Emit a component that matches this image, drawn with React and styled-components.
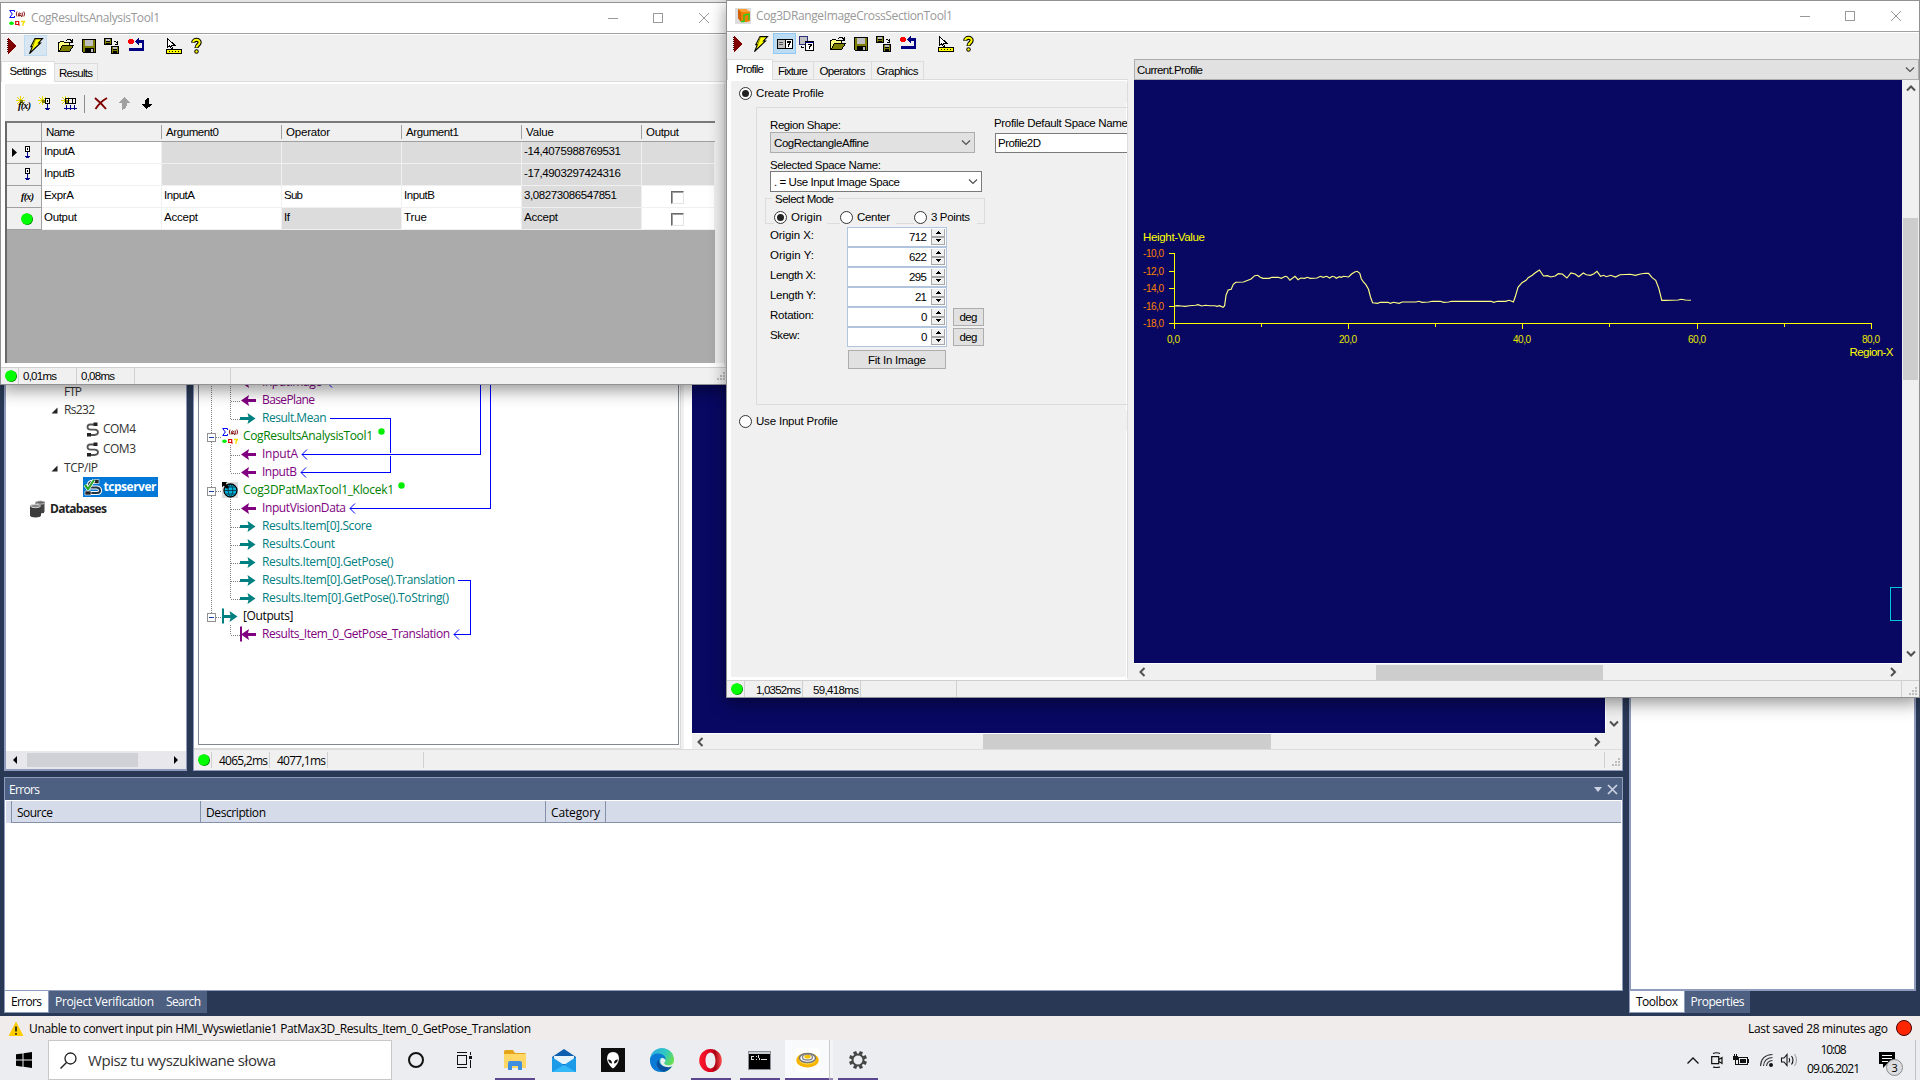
import React, { useLayoutEffect, useRef } from "react";
import styled, { createGlobalStyle, css } from "styled-components";

const UI = '"Open Sans", "Noto Sans", sans-serif';
const SANS = '"Liberation Sans", Arial, sans-serif';
const NAVY = "#080863";

const Global = createGlobalStyle`
  * { box-sizing: border-box; }
  body { margin: 0; overflow: hidden; background: #293955; }
  svg { display: block; flex: none; overflow: visible; }
`;

/* ---------- text fitted to a column width ---------- */
const TextSpan = styled.span`
  display: inline-block;
  flex: none;
  white-space: pre;
  font-family: ${(p) => (p.$ui ? UI : SANS)};
  font-size: ${(p) => p.$size || (p.$ui ? 12 : 11.5)}px;
  font-weight: ${(p) => (p.$bold ? 700 : 400)};
  line-height: 14px;
  color: ${(p) => p.$color || "#000"};
`;

function Text({ w, ui, size, bold, color, children }) {
  const ref = useRef(null);
  useLayoutEffect(() => {
    const el = ref.current;
    if (!w || !el) return;
    el.style.letterSpacing = "0px";
    const natural = el.getBoundingClientRect().width;
    const n = Math.max(1, el.textContent.length - 1);
    el.style.letterSpacing = `${((w - natural) / n).toFixed(3)}px`;
    el.style.width = `${w}px`;
  }, [w, children]);
  return (
    <TextSpan ref={ref} $ui={ui} $size={size} $bold={bold} $color={color}>
      {children}
    </TextSpan>
  );
}

/* ---------- icons ---------- */
const Px = ({ w = 16, h = 16, vb, crisp = true, children }) => (
  <svg width={w} height={h} viewBox={vb || `0 0 ${w} ${h}`} shapeRendering={crisp ? "crispEdges" : "auto"} fill="none">
    {children}
  </svg>
);

const PlayIcon = () => (
  <Px w={9}>
    <path d="M1 0v16l8-8z" fill="#800000" />
    <path d="M.5 1v14" stroke="#400" strokeDasharray="1 1" />
  </Px>
);
const BoltIcon = () => (
  <Px w={14} crisp={false}>
    <path d="M6 .6h7.5L9.5 5h2L2 14l-1.5 1.6L3.4 8.6H1.8z" fill="#ff0" stroke="#000" strokeWidth="1.1" />
    <path d="M3.6 8.6 6.5 1" stroke="#808000" />
  </Px>
);
const OpenIcon = () => (
  <Px>
    <path d="M.5 13.5v-9h1l1-1h3l1 1h5v3" fill="#ffff80" stroke="#000" />
    <path d="M1 13.5 4.5 7.5h11l-4 6z" fill="#808000" stroke="#000" />
    <path d="M8.5 2.5l1.5-1h2l2 2M14.5 1v3h-3" stroke="#000" />
  </Px>
);
const SaveShape = () => (
  <>
    <path d="M.5.5h13v13h-12l-1-1z" fill="#808000" stroke="#000" />
    <path d="M3 1h8v6H3z" fill="#c0c0c0" />
    <path d="M3 9h9v5H3z" fill="#000" />
    <path d="M9 10h2v3H9z" fill="#c0c0c0" />
  </>
);
const SaveIcon = () => (
  <Px w={14} h={14}>
    <SaveShape />
  </Px>
);
const CopiesIcon = () => (
  <Px>
    <path d="M0 0h8v7H0zM7 8h8v8H7z" fill="#000" />
    <path d="M1 1h1v5H1zM6 1h1v5H6zM8 9h1v6H8zM13 9h1v6h-1zM2 4h4v1H2zM9 12h4v1H9z" fill="#808000" />
    <path d="M2 1h4v2H2zM9 9h4v2H9z" fill="#c0c0c0" />
    <path d="M9.5 3.5h2l1.500 1.500M13.500 3v3h-3" stroke="#000" />
  </Px>
);
const ResetIcon = () => (
  <Px>
    <circle cx="3" cy="3.500" r="3" fill="#f00" />
    <path d="M9 3.500h6v7.500M1 11.500h15" stroke="#000080" strokeWidth="2.600" />
    <path d="M7 3.500l4-3.500v7z" fill="#000080" />
  </Px>
);
const RulerIcon = () => (
  <Px>
    <path d="M1.500.5v9l2-2 2 3.500h1l-1-4h3z" fill="#fff" stroke="#000" />
    <path d="M.5 11.500h15v4H.5z" fill="#ff0" stroke="#000" />
    <path d="M3 13.500h11" stroke="#000" strokeDasharray="1 2" />
  </Px>
);
const HelpIcon = () => (
  <Px w={11} crisp={false}>
    <path d="M2.200 4.800C2.200 1 9 1 8.600 4.600 8.400 7 5.500 7 5.500 10" stroke="#000" strokeWidth="4.200" />
    <circle cx="5.500" cy="13.500" r="2.200" fill="#000" />
    <path d="M2.200 4.300C2.200 1 9 1 8.600 4.600 8.400 7 5.500 7 5.500 9.500" stroke="#ff0" strokeWidth="2" />
    <circle cx="5.500" cy="13.500" r="1.200" fill="#ff0" />
  </Px>
);
const AnalysisIcon = () => (
  <Px crisp={false}>
    <path d="M5.500 2V.5H.7L3.300 4 .7 7.500h4.800V6" stroke="#00f" strokeWidth="1" />
    <path d="M8 1.500q-1.500 2.500 0 5M14.800 1.500q1.500 2.500 0 5" stroke="#800000" strokeWidth=".9" />
    <path d="M10.500 2.500Q8.500 4 10 6.300L11.500 3M11.500 5l.5 1.300h1.200V2.500" stroke="#800000" strokeWidth="1" />
    <ellipse cx="2.500" cy="13.300" rx="2.300" ry="1.800" fill="#0e0" />
    <path d="M6.700 11.500h3v3h-3zM9 14l1.500 1.500" stroke="#e00000" strokeWidth="1.200" />
    <path d="M12 11.500h3.500L14 13.800V16" stroke="#f0e000" strokeWidth="1.300" />
  </Px>
);
const RangeIcon = () => (
  <Px crisp={false}>
    <path d="M0 0h16v16H0z" fill="#ddd" />
    <path d="M3 1h8l4 3v9l-3 1H6l-3-4z" fill="#f08000" />
    <path d="M3 1h8l4 3H6z" fill="#ffa030" />
    <path d="M3 1l3 3v10l-3-4z" fill="#d06000" />
    <path d="M6 13.500h3V7l5-1v6" stroke="#20d020" strokeWidth="1.300" />
  </Px>
);
const PanelsIcon = () => (
  <Px h={10}>
    <path d="M.5.5h15v9H.5z" fill="#fff" stroke="#000" />
    <path d="M1 1h7v8H1z" fill="#c0c0c0" />
    <path d="M2 3.500h4M2 5.500h4" stroke="#555" />
    <path d="M8.500 0v10" stroke="#000" />
    <path d="M10 2h4v2h-1v2h-1v2h-1V5h1V4h-2z" fill="#000" />
  </Px>
);
const FloatIcon = () => (
  <Px w={15} h={15}>
    <path d="M.5.5h8v8h-8z" fill="#c0c0c0" stroke="#303080" />
    <path d="M6.500 5.500h8v9h-8z" fill="#fff" stroke="#000" />
    <path d="M6 6.500h9" stroke="#000080" />
    <path d="M9 8h4v2h-1v1h-1v2h-1v-3h1V9H9z" fill="#000" />
    <path d="M2.500 10v1.500H5" stroke="#000" />
  </Px>
);
const Spark = () => (
  <>
    <path d="M4.500 0v9M0 4.500h9M1 1l7 7M8 1L1 8" stroke="#e6d800" strokeWidth="1" />
    <path d="M4 4h3v3H4z" fill="#808000" />
  </>
);
const FxShape = ({ x = 0, y = 12 }) => (
  <text x={x} y={y} fontFamily="Liberation Serif, serif" fontStyle="italic" fontWeight="700" fontSize="10" fill="#000" textLength="13">
    f(x)
  </text>
);
const NewFxIcon = () => (
  <Px crisp={false}>
    <g shapeRendering="crispEdges">
      <Spark />
    </g>
    <FxShape x={2} y={13} />
  </Px>
);
const FxIcon = () => (
  <Px w={13} h={12} crisp={false}>
    <FxShape y={9} />
  </Px>
);
const Pin = ({ x = 0, y = 0 }) => (
  <g transform={`translate(${x} ${y})`}>
    <path d="M.5.5h4v5h-4z" fill="#fff" stroke="#000" />
    <path d="M2.500 2v2" stroke="#000" />
    <path d="M2.500 6v6M0 10h5M1 11h3" stroke="#000090" />
  </g>
);
const NewPinIcon = () => (
  <Px w={13}>
    <Spark />
    <Pin x={7} y={2} />
  </Px>
);
const NewPinsIcon = () => (
  <Px>
    <Spark />
    <path d="M4.500 2.500h10v5h-10zM7.500 2v6M11.500 2v6" stroke="#000" />
    <path d="M5.500 9v5M9.500 9v5M13.500 9v5M3 12.500h13" stroke="#000090" />
  </Px>
);
const PinIcon = () => (
  <Px w={5} h={13}>
    <Pin />
  </Px>
);
const DeleteIcon = () => (
  <Px w={14} h={13} crisp={false}>
    <path d="M1 1q6 5 11 11M13 1Q6 5 1.500 12" stroke="#800000" strokeWidth="1.900" />
  </Px>
);
const UpIcon = () => (
  <Px w={11} h={13}>
    <path d="M5 0l6 6H8q0 5-5 7V6H0z" fill="#a0a0a0" />
  </Px>
);
const DownIcon = () => (
  <Px w={12} h={13}>
    <path d="M5.500 12L0 7h3.500Q3 2 8.500 0L8 3v4h4z" fill="#000" />
  </Px>
);
const Ball = ({ s = 12 }) => (
  <Px w={s} h={s} vb="0 0 12 12" crisp={false}>
    <circle cx="6.300" cy="6.300" r="5.700" fill="#008000" />
    <circle cx="5.700" cy="5.800" r="5.600" fill="#0f0" />
  </Px>
);
const chev = { down: "M1 2.500l4 4 4-4", up: "M1 6.500l4-4 4 4", left: "M6.500 1l-4 4 4 4", right: "M3 1l4 4-4 4" };
const Chevron = ({ dir, thin, color = "#505050" }) => (
  <Px w={10} h={10} crisp={false}>
    <path d={chev[dir]} stroke={color} strokeWidth={thin ? 1.2 : 2} />
  </Px>
);
const Grip = () => (
  <Px w={9} h={9}>
    <path d="M6 0h2v2H6zM3 3h2v2H3zM6 3h2v2H6zM0 6h2v2H0zM3 6h2v2H3zM6 6h2v2H6z" fill="#bdbdbd" />
  </Px>
);

/* ---------- desktop frame ---------- */
const Desktop = styled.div`
  position: relative;
  display: flex;
  flex-direction: column;
  width: 1920px;
  height: 1080px;
  overflow: hidden;
  background: #293955;
`;
const Ide = styled.div`
  display: flex;
  height: 1016px;
  padding: 0 4px;
`;
const MainSide = styled.div`
  width: 1619px;
  display: flex;
  flex-direction: column;
`;
const Docks = styled.div`
  display: flex;
  gap: 6px;
  height: 771px;
`;
const Explorer = styled.div`
  width: 183px;
  display: flex;
  flex-direction: column;
  background: #fff;
  border: 1px solid #8e9bbc;
  border-width: 0 1px 2px 2px;
`;
const ExplorerTree = styled.div`
  flex: 1;
  padding-top: 382px;
`;
const TreeLine = styled.div`
  height: ${(p) => p.$h}px;
  padding-left: ${(p) => p.$pl}px;
  display: flex;
  align-items: center;
  gap: ${(p) => p.$gap ?? 6}px;
`;
const Selected = styled.div`
  display: flex;
  align-items: center;
  gap: 2.500px;
  width: 75px;
  height: 20px;
  padding-left: 1px;
  background: #0078d7;
`;
const ExplorerScroll = styled.div`
  height: 18px;
  display: flex;
  align-items: center;
  padding: 0 8px 0 7px;
  background: #e8e8ec;
  justify-content: space-between;
`;
const ExplorerThumb = styled.div`
  width: 111px;
  height: 14px;
  margin: 0 36px 0 9px;
  background: #d0d1d7;
`;

const CableIcon = () => (
  <Px w={13} h={15} crisp={false}>
    <path d="M9 2.500H4Q1.500 2.500 1.500 5t3 2.700h4Q12 8 12 10.300T8.500 13H4" stroke="#555" strokeWidth="1.800" />
    <path d="M7.500.5h4v3.600h-4zM1 11h4v3.600H1z" fill="#222" />
  </Px>
);
const ServerIcon = () => (
  <Px w={17} h={17} crisp={false}>
    <path d="M12 3H8Q5 3 5 6t3 2.500h5q3 .5 3 3T13 14H6" stroke="#fff" strokeWidth="4" />
    <path d="M12 3H8Q5 3 5 6t3 2.500h5q3 .5 3 3T13 14H6" stroke="#234" strokeWidth="2" />
    <path d="M10 .5h5v4h-5z" fill="#222" stroke="#fff" strokeWidth=".6" />
    <path d="M1 6l3 4 6-9" stroke="#fff" strokeWidth="3.500" />
    <path d="M1 6l3 4 6-9" stroke="#2aa52a" strokeWidth="2.200" />
    <path d="M1 12h6v4H1z" fill="#222" stroke="#fff" strokeWidth=".6" />
  </Px>
);
const DbIcon = () => (
  <Px w={16} h={18} crisp={false}>
    <path d="M5 2.500C5 .2 15 .2 15 2.500V12q-1 2-4 2" fill="#444" stroke="#fff" />
    <ellipse cx="10.500" cy="2.500" rx="4.500" ry="1.700" fill="#666" stroke="#fff" strokeWidth=".6" />
    <path d="M0 6c0-2.400 11-2.400 11 0v9.500c0 2.600-11 2.600-11 0z" fill="#3c3c3c" />
    <ellipse cx="5.500" cy="6" rx="5" ry="1.700" fill="#888" stroke="#fff" strokeWidth=".7" />
  </Px>
);
const Expanded = () => (
  <Px w={7} h={7} crisp={false}>
    <path d="M6.500.5v6h-6z" fill="#222" />
  </Px>
);

const Job = styled.div`
  width: 1430px;
  display: flex;
  flex-direction: column;
  background: #f0f0f0;
  border: 1px solid #8e9bbc;
  border-top: 0;
`;
const JobBody = styled.div`
  height: 750px;
  display: flex;
  border-bottom: 1px solid #dcdcdc;
`;
const JobTreePane = styled.div`
  width: 487px;
  padding: 0 2px 3px 4px;
  background: #fff;
  border-right: 1px solid #dcdcdc;
  border-bottom: 1px solid #dcdcdc;
  height: 749px;
`;
const JobTree = styled.div`
  height: 745px;
  margin-right: -1px;
  position: relative;
  padding-top: 373px;
  border: 1px solid #828790;
  border-top: 0;
`;
const Wires = styled.div`
  position: absolute;
  left: -199px;
  top: 0;
  z-index: 1;
`;
const JobRow = styled.div`
  height: 18px;
  display: flex;
  align-items: center;
  padding-left: ${(p) => (p.$root ? 23 : 41)}px;
  gap: ${(p) => (p.$root ? 5 : 6)}px;
`;
const JobView = styled.div`
  flex: 1;
  display: grid;
  grid-template-columns: 914px 1fr;
  grid-template-rows: 733px 16px;
  margin-left: 3px;
  border-left: 8px solid #fff;
`;
const NavyPane = styled.div`
  background: ${NAVY};
  border-right: 1px solid #fff;
`;

/* scroll bars */
const Bar = styled.div`
  display: flex;
  flex-direction: ${(p) => (p.$v ? "column" : "row")};
  align-items: center;
  justify-content: space-between;
  padding: ${(p) => (p.$v ? "4px 0" : "0 4px")};
  background: #f0f0f0;
  ${(p) => !p.$v && css`border-top: 1px solid #fff;`}
`;
const Thumb = styled.div`
  background: #cdcdcd;
  ${(p) =>
    p.$v
      ? css`width: 15px; height: ${p.$len}px; margin: ${p.$before}px 0 auto;`
      : css`height: 15px; width: ${p.$len}px; margin: 0 auto 0 ${p.$before}px;`}
`;
const EndDown = styled(Bar)`
  justify-content: flex-end;
`;

/* status bars */
const StatusRow = styled.div`
  height: ${(p) => p.$h || 18}px;
  display: flex;
  align-items: center;
  padding-left: ${(p) => p.$pl ?? 4}px;
  background: #f0f0f0;
`;
const StatusCell = styled.div`
  width: ${(p) => p.$w}px;
  height: 16px;
  display: flex;
  align-items: center;
  justify-content: ${(p) => (p.$right ? "flex-end" : "flex-start")};
  padding: ${(p) => (p.$low ? 1 : 0)}px ${(p) => (p.$right ? 1 : 0)}px 0 ${(p) => p.$pl || 0}px;
  border-right: 1px solid #d0d0d0;
`;
const GripCorner = styled.div`
  margin: 4px 1px 0 auto;
`;

/* errors */
const Errors = styled.div`
  margin-top: 6px;
  height: 214px;
  display: flex;
  flex-direction: column;
  background: #fff;
  border: 1px solid #8e9bbc;
`;
const ErrorsTitle = styled.div`
  height: 22px;
  display: flex;
  align-items: center;
  justify-content: space-between;
  padding: 2px 5px 0 4px;
  background: #4d6082;
`;
const TitleButtons = styled.div`
  display: flex;
  gap: 6px;
  align-items: center;
  padding-bottom: 2px;
`;
const ErrorsHead = styled.div`
  height: 22px;
  margin: 1px 1px 0 1px;
  padding-left: 5px;
  display: flex;
  background: #d6dbe9;
`;
const ErrorsCol = styled.div`
  ${(p) => (p.$w ? `width: ${p.$w}px;` : "flex: 1;")}
  padding: 2px 0 0 5px;
  display: flex;
  align-items: center;
  border-left: 1px solid #8591a8;
  border-bottom: 1px solid #8591a8;
`;
const DockTabs = styled.div`
  display: flex;
  height: 22px;
`;
const DockTab = styled.div`
  width: ${(p) => p.$w}px;
  display: flex;
  align-items: center;
  justify-content: center;
  padding-top: ${(p) => (p.$on ? 1 : 0)}px;
  background: ${(p) => (p.$on ? "#fff" : "#4d6082")};
  border: ${(p) => (p.$on ? "1px solid #8e9bbc" : "0")};
  border-top: 0;
`;
const RightDock = styled.div`
  width: 287px;
  margin-left: 6px;
`;
const ToolboxPane = styled.div`
  height: 991px;
  background: #fff;
  border: 1px solid #8e9bbc;
  border-width: 0 2px 2px 2px;
`;

/* application status line */
const AppStatus = styled.div`
  height: 24px;
  display: flex;
  align-items: center;
  justify-content: space-between;
  padding: 1px 8px 0 9px;
  background: #f0eceb;
`;
const StatusGroup = styled.div`
  display: flex;
  align-items: center;
  gap: ${(p) => p.$gap}px;
`;
const RedDot = styled.div`
  width: 16px;
  height: 16px;
  margin-top: -1px;
  border-radius: 50%;
  background: #ff2600;
  border: 1px solid #400;
`;

/* taskbar */
const Taskbar = styled.div`
  height: 40px;
  display: flex;
  background: #ebedf0;
`;
const StartButton = styled.div`
  width: 48px;
  display: flex;
  align-items: center;
  padding-left: 16px;
`;
const SearchBox = styled.div`
  width: 344px;
  display: flex;
  align-items: center;
  gap: 11px;
  padding: 0 0 0 11px;
  background: #fff;
  border: 1px solid #c8c8c8;
`;
const TaskItem = styled.div`
  width: ${(p) => p.$w}px;
  margin-left: ${(p) => p.$ml || 0}px;
  padding-top: 2px;
  display: flex;
  align-items: center;
  justify-content: center;
  background: ${(p) => (p.$active ? "#f9fafc" : "transparent")};
  border-bottom: 2px solid ${(p) => (p.$open ? "#5b4690" : "transparent")};
`;
const ActiveSplit = styled.div`
  width: 4px;
  background: #f3f4f6;
  border-left: 1px solid #c9cacc;
  border-bottom: 2px solid #9284b4;
`;
const Tray = styled.div`
  margin-left: auto;
  width: 233px;
  display: flex;
  align-items: center;
`;
const TrayItem = styled.div`
  width: ${(p) => p.$w}px;
`;
const Clock = styled.div`
  width: 53px;
  height: 40px;
  display: flex;
  flex-direction: column;
  align-items: center;
  justify-content: space-between;
  padding: 3px 0 4px;
`;
const Notify = styled.div`
  position: relative;
  width: 36px;
  margin-left: 19px;
`;
const Badge = styled.div`
  position: absolute;
  left: 7px;
  top: 7px;
  width: 17px;
  height: 17px;
  display: flex;
  align-items: center;
  justify-content: center;
  border-radius: 50%;
  background: #dcdde0;
  border: 1px solid #8a8a8a;
`;
const ShowDesktop = styled.div`
  width: 5px;
  height: 40px;
  border-left: 1px solid #bfc1c4;
`;

/* floating windows */
const Window = styled.div`
  position: absolute;
  left: ${(p) => p.$x}px;
  top: ${(p) => p.$y}px;
  width: ${(p) => p.$w}px;
  height: ${(p) => p.$h}px;
  z-index: ${(p) => p.$z};
  display: flex;
  flex-direction: column;
  background: #f0f0f0;
  border: 1px solid #929294;
  box-shadow: ${(p) => (p.$y ? "0 -2px 0 #e4e4e4, " : "")}0 5px 16px rgba(0, 0, 0, 0.42);
`;
const TitleBar = styled.div`
  height: ${(p) => p.$h}px;
  flex: none;
  display: flex;
  align-items: center;
  gap: ${(p) => p.$gap || 6}px;
  padding: 0 ${(p) => p.$pr}px 0 ${(p) => p.$pl}px;
  background: #fff;
  border-bottom: 1px solid #a0a0a0;
`;
const Controls = styled.div`
  margin-left: auto;
  display: flex;
  gap: 35px;
  & > :last-child { margin-left: 1px; }
`;
const ToolRow = styled.div`
  height: ${(p) => p.$h}px;
  flex: none;
  display: flex;
  align-items: flex-start;
  border-top: 1px solid #fff;
`;
const Tool = styled.div`
  width: ${(p) => p.$w}px;
  height: 21px;
  margin-left: ${(p) => p.$ml || 0}px;
  display: flex;
  align-items: center;
  justify-content: center;
  ${(p) => p.$on && css`
    background: ${p.$on === "strong" ? "#bcdcf4" : "#d8e6f2"};
    border: 1px solid ${p.$on === "strong" ? "#90c8f6" : "#c0dcf3"};
  `}
`;
const TabRow = styled.div`
  height: ${(p) => p.$h}px;
  flex: none;
  display: flex;
  align-items: flex-end;
  border-bottom: 1px solid #dcdcdc;
`;
const Tab = styled.div`
  width: ${(p) => p.$w}px;
  height: ${(p) => (p.$on ? 21 : 18)}px;
  margin-bottom: ${(p) => (p.$on ? -1 : 0)}px;
  display: flex;
  align-items: center;
  justify-content: center;
  padding-bottom: ${(p) => (p.$on ? 2 : 0)}px;
  padding-top: ${(p) => (p.$on ? 0 : 1)}px;
  background: ${(p) => (p.$on ? "#fff" : "#f0f0f0")};
  border: 1px solid #dcdcdc;
  border-bottom: 0;
  ${(p) => (p.$on ? "" : "border-left: 0;")}
`;
const AnalysisPane = styled.div`
  height: 285px;
  flex: none;
  margin-right: 5px;
  padding-right: 9px;
  background: #f0f0f0;
  border: 1px solid #dcdcdc;
  border-top: 2px solid #fff;
  border-left: 4px solid #fff;
  border-bottom: 4px solid #fff;
`;
const InnerTools = styled.div`
  height: 37px;
  display: flex;
  align-items: center;
  padding: 2px 0 0 11px;
`;
const Gap = styled.div`
  width: ${(p) => p.$w}px;
`;
const Sep = styled.div`
  width: 1px;
  height: 18px;
  background: #8c8c8c;
`;
const Grid = styled.div`
  height: 242px;
  background: #ababab;
  border: solid #696969;
  border-width: 2px 0 0 2px;
  border-top-color: #7a7a7a;
`;
const GridRow = styled.div`
  display: grid;
  grid-template-columns: 35px 120px 120px 120px 120px 120px 73px;
  height: ${(p) => (p.$head ? 19 : 22)}px;
  overflow: hidden;
`;
const HeadCell = styled.div`
  display: flex;
  align-items: center;
  padding: 0 0 0 4px;
  background: #f0f0f0;
  border-bottom: 1px solid #a0a0a0;
  &::after {
    content: "";
    width: 1px;
    height: 14px;
    margin-left: auto;
    background: #a0a0a0;
  }
`;
const Corner = styled.div`
  background: #f0f0f0;
  border-right: 1px solid #a0a0a0;
  border-bottom: 1px solid #a0a0a0;
`;
const LastHead = styled(HeadCell)`
  &::after { display: none; }
`;
const RowHead = styled.div`
  display: flex;
  align-items: center;
  justify-content: flex-end;
  gap: 8px;
  padding-right: ${(p) => p.$pr}px;
  background: #f0f0f0;
  border-right: 1px solid #a0a0a0;
  border-bottom: 1px solid #a0a0a0;
`;
const Cell = styled.div`
  display: flex;
  align-items: center;
  justify-content: ${(p) => (p.$center ? "center" : "flex-start")};
  padding: 0 ${(p) => (p.$center ? 2 : 0)}px ${(p) => (p.$center ? 2 : 4)}px 2px;
  background: ${(p) => (p.$off ? "#dcdcdc" : "#fff")};
  border-right: 1px solid #f0f0f0;
  border-bottom: 1px solid #f0f0f0;
`;
const Check = styled.div`
  width: 13px;
  height: 13px;
  margin: 3px 1px 0 0;
  background: #fff;
  border: 1px solid;
  border-color: #696969 #e3e3e3 #e3e3e3 #696969;
  box-shadow: inset 1px 1px 0 #a0a0a0;
`;

/* cross-section window */
const Split = styled.div`
  flex: 1;
  display: flex;
  min-height: 0;
`;
const ProfileSide = styled.div`
  width: 401px;
  flex: none;
  display: flex;
  flex-direction: column;
`;
const ProfilePane = styled.div`
  flex: 1;
  display: flex;
  flex-direction: column;
  overflow: hidden;
  border: 1px solid #dcdcdc;
  border-top: 1px solid #fff;
  border-left: 4px solid #fff;
  border-bottom: 3px solid #fff;
  box-shadow: inset -1px 0 0 #fff;
`;
const RadioLine = styled.label`
  display: flex;
  align-items: center;
  gap: 4px;
  height: ${(p) => p.$h || 20}px;
  ${(p) => p.$w && `width: ${p.$w}px;`}
  padding-left: ${(p) => p.$pl || 0}px;
  margin-top: ${(p) => p.$mt || 0}px;
  background: #f0f0f0;
`;
const RadioMark = styled.span`
  width: 13px;
  height: 13px;
  display: flex;
  flex: none;
  border-radius: 50%;
  background: #fff;
  border: 1px solid #333;
  &::after {
    content: "";
    width: 7px;
    height: 7px;
    margin: auto;
    border-radius: 50%;
    background: ${(p) => (p.$on ? "#222" : "transparent")};
  }
`;
const Group = styled.div`
  display: flex;
  width: 420px;
  height: 298px;
  flex: none;
  margin: 4px 0 0 25px;
  border: 1px solid #dcdcdc;
`;
const GroupLeft = styled.div`
  width: 237px;
  padding-left: 13px;
`;
const GroupRight = styled.div`
  flex: 1;
`;
const FieldLabel = styled.div`
  height: ${(p) => p.$h}px;
  padding-top: ${(p) => p.$pt}px;
  line-height: 0;
`;
const Select = styled.div`
  width: ${(p) => p.$w}px;
  height: 21px;
  display: flex;
  align-items: center;
  justify-content: space-between;
  padding: 0 3px 0 ${(p) => p.$pl || 3}px;
  background: ${(p) => (p.$white ? "#fff" : "#e1e1e1")};
  border: 1px solid ${(p) => (p.$white ? "#7a7a7a" : "#adadad")};
`;
const TextInput = styled.div`
  width: 180px;
  height: 20px;
  margin-left: 1px;
  display: flex;
  align-items: center;
  padding-left: 2px;
  background: #fff;
  border: 1px solid #7a7a7a;
`;
const ModeBox = styled.div`
  width: 220px;
  height: 26px;
  margin: 6px 0 3px -5px;
  border: 1px solid #dcdcdc;
`;
const Legend = styled.div`
  width: 65px;
  height: 14px;
  margin: -7px 0 0 6px;
  padding-left: 3px;
  line-height: 0;
  background: #f0f0f0;
`;
const ModeRow = styled.div`
  display: flex;
  margin: 1px 0 0 8px;
`;
const NumRow = styled.div`
  height: 20px;
  display: flex;
  align-items: center;
`;
const NumLabel = styled.div`
  width: 77px;
  line-height: 0;
  padding-bottom: 4px;
`;
const NumBox = styled.div`
  width: 100px;
  height: 20px;
  display: flex;
  align-items: center;
  justify-content: flex-end;
  gap: 4px;
  padding: 0 1px 0 0;
  background: #fff;
  border: 1px solid #b0c4de;
`;
const Spinner = styled.div`
  width: 14px;
  height: 16px;
  display: flex;
  flex-direction: column;
  align-items: center;
  justify-content: space-between;
  padding: 2px 0;
  background: linear-gradient(#f0f0f0 7px, #a8a8a8 7px, #a8a8a8 9px, #f0f0f0 9px);
  border: 1px solid #a8a8a8;
  border-top: 0;
`;
const Button = styled.div`
  width: ${(p) => p.$w}px;
  height: ${(p) => p.$h}px;
  margin: ${(p) => p.$m || "0"};
  display: flex;
  align-items: center;
  justify-content: center;
  background: #e1e1e1;
  border: 1px solid #adadad;
`;
const ViewSide = styled.div`
  width: 785px;
  margin-left: 6px;
  padding-top: 1px;
  display: flex;
  flex-direction: column;
`;
const ViewSelect = styled(Select)`
  width: 785px;
`;
const ViewGrid = styled.div`
  flex: 1;
  display: grid;
  grid-template-columns: 768px 17px;
  grid-template-rows: 583px 17px;
`;
const Canvas = styled.div`
  background: ${NAVY};
  overflow: hidden;
`;
const StatusBorder = styled.div`
  flex: none;
  border-top: 1px solid #d0d0d0;
`;

const WindowButtons = () => (
  <Controls>
    <Px w={10} h={10}><path d="M0 5.500h10" stroke="#999" /></Px>
    <Px w={10} h={10}><path d="M.5.5h9v9h-9z" stroke="#999" /></Px>
    <Px w={10} h={10} crisp={false}><path d="M0 0l10 10M10 0L0 10" stroke="#999" /></Px>
  </Controls>
);

/* ---------- job tree ---------- */
const InArrow = ({ bar }) => (
  <Px w={16} h={12} crisp={false}>
    <path d="M1 6.500l8-5.500L8 5h8v3H8l1 4z" fill="#800080" />
    {bar && <path d="M1-1.500v15" stroke="#800080" strokeWidth="2" />}
  </Px>
);
const OutArrow = ({ bar }) => (
  <Px w={16} h={12} crisp={false}>
    <path d="M15.500 6.500L7.500 1l1 4H0v3h8.500l-1 4z" fill="#008080" />
    {bar && <path d="M1-1.500v15" stroke="#008080" strokeWidth="2" />}
  </Px>
);
const GlobeIcon = () => (
  <Px crisp={false}>
    <path d="M0 0h16v16H0z" fill="#ddd" />
    <circle cx="8.500" cy="8.500" r="6.500" fill="#00b4e0" stroke="#000" strokeWidth="1.300" />
    <path d="M2 8.500h13M8.500 2q-5 6.500 0 13M8.500 2q5 6.500 0 13M3.500 5h10M3.500 12h10" stroke="#003848" strokeWidth=".9" />
    <path d="M0 0h5L3.800 1.800 7 5 5 7 1.800 3.800 0 5z" fill="#000" />
  </Px>
);

const PURPLE = "#800080";
const TEAL = "#008080";
const jobRows = [
  { t: "InputImage", w: 60, c: PURPLE, i: <InArrow /> },
  { t: "BasePlane", w: 53, c: PURPLE, i: <InArrow /> },
  { t: "Result.Mean", w: 64.5, c: TEAL, i: <OutArrow /> },
  { t: "CogResultsAnalysisTool1", w: 130, c: "#008000", i: <AnalysisIcon />, root: true },
  { t: "InputA", w: 36, c: PURPLE, i: <InArrow /> },
  { t: "InputB", w: 35, c: PURPLE, i: <InArrow /> },
  { t: "Cog3DPatMaxTool1_Klocek1", w: 151, c: "#008000", i: <GlobeIcon />, root: true },
  { t: "InputVisionData", w: 84, c: PURPLE, i: <InArrow /> },
  { t: "Results.Item[0].Score", w: 110, c: TEAL, i: <OutArrow /> },
  { t: "Results.Count", w: 73, c: TEAL, i: <OutArrow /> },
  { t: "Results.Item[0].GetPose()", w: 131.5, c: TEAL, i: <OutArrow /> },
  { t: "Results.Item[0].GetPose().Translation", w: 193, c: TEAL, i: <OutArrow /> },
  { t: "Results.Item[0].GetPose().ToString()", w: 187, c: TEAL, i: <OutArrow /> },
  { t: "[Outputs]", w: 50.5, c: "#000", i: <OutArrow bar />, root: true },
  { t: "Results_Item_0_GetPose_Translation", w: 188, c: PURPLE, i: <InArrow bar /> },
];

const leafYs = [401, 419, 455, 473, 509, 527, 545, 563, 581, 599, 635];
const TreeWires = () => (
  <Px w={690} h={760}>
    <g stroke="#808080" strokeDasharray="1 1">
      <path d="M211.500 370V617M230.500 370V419M230.500 445V473M230.500 499V599M230.500 625V635" />
      {leafYs.map((y) => <path key={y} d={`M231 ${y}.500h10`} />)}
      {[437, 491, 617].map((y) => <path key={y} d={`M216 ${y}.500h6`} />)}
    </g>
    {[437, 491, 617].map((y) => (
      <g key={y}>
        <path d={`M207.500 ${y - 3.5}h8v8h-8z`} fill="#fff" stroke="#919191" />
        <path d={`M209 ${y}.500h5`} stroke="#2040a0" />
      </g>
    ))}
    <g stroke="#00f">
      <path d="M330 418.500h60.500V453M390.500 456v16.500H301M480.500 370v84.500H302M490.500 370v138.500H350M458 580.500h12.500v54H454" />
      <g shapeRendering="auto">
        <path d="M307 449.500l-5 5 5 5M306 467.500l-5 5 5 5M355 503.500l-5 5 5 5M459 629.500l-5 5 5 5M332 377.500l-5 5 5 5" />
      </g>
    </g>
    <g fill="#0e0" shapeRendering="auto">
      <circle cx="381.500" cy="431.500" r="3.200" />
      <circle cx="401.500" cy="485.500" r="3.200" />
    </g>
  </Px>
);

/* ---------- profile chart ---------- */
const profile = [
  106,319,112,317,120,318,128,319,136,317,148,316,153,314,160,318,168,316,176,317,186,317,190,319,195,317,202,322,205,317,208,285,212,270,218,268,222,253,227,247,242,246,252,240,257,237,264,227,270,226,274,231,280,235,292,235,298,232,310,232,316,235,324,229,328,231,333,241,343,229,349,239,354,234,362,235,367,232,373,235,386,234,393,229,398,232,405,229,411,234,416,229,421,231,424,235,430,230,434,232,438,229,448,231,454,222,460,216,465,214,470,220,473,236,477,246,482,254,487,268,491,291,495,308,505,310,510,307,525,307,530,310,536,307,547,310,553,306,580,306,586,304,592,307,605,306,612,304,628,304,634,307,644,306,650,304,728,304,732,307,740,304,756,304,762,301,768,304,771,306,775,289,780,262,788,248,796,241,800,233,808,226,814,218,822,210,830,228,838,227,844,231,853,228,859,221,867,222,876,234,884,219,892,222,899,230,908,219,914,224,922,226,929,221,935,214,942,229,948,226,953,230,962,226,971,231,980,224,1000,223,1010,226,1020,222,1030,220,1036,220,1043,233,1050,241,1056,265,1062,301,1068,301,1094,300,1100,298,1108,300,1119,301,
];
const pts = [];
for (let i = 0; i < profile.length; i += 2) {
  pts.push(`${(profile[i] / 1.96 - 14).toFixed(1)},${(profile[i + 1] / 3 + 120).toFixed(1)}`);
}
const majors = [40.5, 214.5, 388.5, 563.5, 737.5];
const Chart = () => (
  <Px w={768} h={583}>
    <g stroke="#ff0">
      <path d="M40.500 173v75M35 243.500h703M35 173.500h6M35 191.500h6M35 208.500h6M35 226.500h6" />
      {majors.map((x) => <path key={x} d={`M${x} 243v6`} />)}
      {[127.5, 301.5, 475.5, 650.5].map((x) => <path key={x} d={`M${x} 243v4`} />)}
    </g>
    <polyline points={pts.join(" ")} stroke="#ffff80" strokeWidth="1.150" shapeRendering="auto" />
    <g fontFamily={SANS} fontSize="11.500" fill="#ff0">
      <text x="9" y="161" textLength="62">Height-Value</text>
      <text x="715.500" y="276" textLength="44">Region-X</text>
    </g>
    <g fontFamily={SANS} fontSize="10" fill="#ff8000">
      {["-10,0", "-12,0", "-14,0", "-16,0", "-18,0"].map((t, i) => (
        <text key={t} x="9" y={177 + i * 17.5} textLength="21">{t}</text>
      ))}
    </g>
    <g fontFamily={SANS} fontSize="10" fill="#e6e600" textAnchor="middle">
      {["0,0", "20,0", "40,0", "60,0", "80,0"].map((t, i) => (
        <text key={t} x={majors[i] - (i ? 0.5 : 1)} y="263" textLength={i ? 18 : 13}>{t}</text>
      ))}
    </g>
    <path d="M770 507.500h-13.500v33H770" stroke="#00c8d8" />
  </Px>
);

/* ---------- windows ---------- */
const SharedTools = () => (
  <>
    <Tool $w={16}><OpenIcon /></Tool>
    <Tool $w={14} $ml={8}><SaveIcon /></Tool>
    <Tool $w={16} $ml={8}><CopiesIcon /></Tool>
    <Tool $w={16} $ml={8}><ResetIcon /></Tool>
    <Tool $w={16} $ml={22}><RulerIcon /></Tool>
    <Tool $w={11} $ml={9}><HelpIcon /></Tool>
  </>
);

const gridHeads = [["Name", 29], ["Argument0", 53], ["Operator", 44], ["Argument1", 53], ["Value", 28]];
const gridRows = [
  { icon: <PinIcon />, pr: 11, current: true, cells: [["InputA", 31], null, null, null, ["-14,4075988769531", 97, 1], null] },
  { icon: <PinIcon />, pr: 11, cells: [["InputB", 31], null, null, null, ["-17,4903297424316", 97, 1], null] },
  { icon: <FxIcon />, pr: 7, cells: [["ExprA", 30], ["InputA", 31], ["Sub", 19], ["InputB", 31], ["3,08273086547851", 93, 1], "check"] },
  { icon: <Ball />, pr: 8, cells: [["Output", 33], ["Accept", 34], ["If", 6, 1], ["True", 23], ["Accept", 34, 1], "check"] },
];

const AnalysisWindow = () => (
  <Window $x={0} $y={2} $w={731} $h={383} $z={2}>
    <TitleBar $h={31} $pl={8} $pr={21}>
      <AnalysisIcon />
      <Text ui w={129} color="#999">CogResultsAnalysisTool1</Text>
      <WindowButtons />
    </TitleBar>
    <ToolRow $h={26}>
      <Tool $w={9} $ml={6}><PlayIcon /></Tool>
      <Tool $w={23} $ml={8} $on="soft"><BoltIcon /></Tool>
      <Gap $w={11} />
      <SharedTools />
    </ToolRow>
    <TabRow $h={22}>
      <Tab $w={54} $on><Text w={37}>Settings</Text></Tab>
      <Tab $w={43}><Text w={34}>Results</Text></Tab>
    </TabRow>
    <AnalysisPane>
      <InnerTools>
        <NewFxIcon /><Gap $w={6} />
        <NewPinIcon /><Gap $w={10} />
        <NewPinsIcon /><Gap $w={7} />
        <Sep /><Gap $w={9} />
        <DeleteIcon /><Gap $w={11} />
        <UpIcon /><Gap $w={11} />
        <DownIcon />
      </InnerTools>
      <Grid>
        <GridRow $head>
          <Corner />
          {gridHeads.map(([t, w]) => <HeadCell key={t}><Text w={w}>{t}</Text></HeadCell>)}
          <LastHead><Text w={33}>Output</Text></LastHead>
        </GridRow>
        {gridRows.map((r, i) => (
          <GridRow key={i}>
            <RowHead $pr={r.pr}>
              {r.current && <Px w={5} h={9} crisp={false}><path d="M0 0v9l5-4.500z" fill="#000" /></Px>}
              {r.icon}
            </RowHead>
            {r.cells.map((c, j) =>
              c === "check" ? (
                <Cell key={j} $center><Check /></Cell>
              ) : (
                <Cell key={j} $off={!c || c[2]}>{c && <Text w={c[1]}>{c[0]}</Text>}</Cell>
              )
            )}
          </GridRow>
        ))}
      </Grid>
    </AnalysisPane>
    <StatusBorder />
    <StatusRow $h={16}>
      <Ball />
      <StatusCell $w={2} />
      <StatusCell $w={58} $pl={4}><Text w={34}>0,01ms</Text></StatusCell>
      <StatusCell $w={58} $pl={4}><Text w={34}>0,08ms</Text></StatusCell>
      <StatusCell $w={96} />
      <Gap $w={486} />
      <Grip />
    </StatusRow>
  </Window>
);

const SpinMarks = () => (
  <Spinner>
    <Px w={6} h={3}><path d="M0 3l3-3 3 3z" fill="#000" /></Px>
    <Px w={6} h={3}><path d="M0 0l3 3 3-3z" fill="#000" /></Px>
  </Spinner>
);

const fields = [
  ["Origin X:", 44, "712", 18], ["Origin Y:", 44, "622", 18], ["Length X:", 46, "295", 18],
  ["Length Y:", 46, "21", 12], ["Rotation:", 44, "0", 6, true], ["Skew:", 30, "0", 6, true],
];

const SectionWindow = () => (
  <Window $x={726} $y={0} $w={1194} $h={698} $z={3}>
    <TitleBar $h={31} $pl={8} $pr={18} $gap={5}>
      <RangeIcon />
      <Text ui w={197} color="#999">Cog3DRangeImageCrossSectionTool1</Text>
      <WindowButtons />
    </TitleBar>
    <ToolRow $h={26}>
      <Tool $w={9} $ml={6}><PlayIcon /></Tool>
      <Tool $w={14} $ml={12}><BoltIcon /></Tool>
      <Tool $w={23} $ml={5} $on="strong"><PanelsIcon /></Tool>
      <Tool $w={15} $ml={3}><FloatIcon /></Tool>
      <Gap $w={16} />
      <SharedTools />
    </ToolRow>
    <Split>
      <ProfileSide>
        <TabRow $h={22}>
          <Tab $w={46} $on><Text w={28}>Profile</Text></Tab>
          <Tab $w={41}><Text w={30}>Fixture</Text></Tab>
          <Tab $w={58}><Text w={46}>Operators</Text></Tab>
          <Tab $w={52}><Text w={42}>Graphics</Text></Tab>
        </TabRow>
        <ProfilePane>
          <RadioLine $pl={8} $mt={2}><RadioMark $on /><Text w={68}>Create Profile</Text></RadioLine>
          <Group>
            <GroupLeft>
              <FieldLabel $h={24} $pt={10}><Text w={71}>Region Shape:</Text></FieldLabel>
              <Select $w={205}><Text w={95}>CogRectangleAffine</Text><Chevron dir="down" thin /></Select>
              <FieldLabel $h={18} $pt={5}><Text w={111}>Selected Space Name:</Text></FieldLabel>
              <Select $w={212} $white><Text w={126}>. = Use Input Image Space</Text><Chevron dir="down" thin /></Select>
              <ModeBox>
                <Legend><Text w={59}>Select Mode</Text></Legend>
                <ModeRow>
                  <RadioLine $w={53}><RadioMark $on /><Text w={31}>Origin</Text></RadioLine>
                  <Gap $w={13} />
                  <RadioLine $w={56}><RadioMark /><Text w={33}>Center</Text></RadioLine>
                  <Gap $w={18} />
                  <RadioLine $w={63}><RadioMark /><Text w={39}>3 Points</Text></RadioLine>
                </ModeRow>
              </ModeBox>
              {fields.map(([label, lw, value, vw, deg]) => (
                <NumRow key={label}>
                  <NumLabel><Text w={lw}>{label}</Text></NumLabel>
                  <NumBox><Text w={vw}>{value}</Text><SpinMarks /></NumBox>
                  {deg && <Button $w={31} $h={18} $m="0 0 0 6px"><Text w={18}>deg</Text></Button>}
                </NumRow>
              ))}
              <Button $w={98} $h={19} $m="3px 0 0 78px"><Text w={58}>Fit In Image</Text></Button>
            </GroupLeft>
            <GroupRight>
              <FieldLabel $h={25} $pt={8}><Text w={134}>Profile Default Space Name</Text></FieldLabel>
              <TextInput><Text w={43}>Profile2D</Text></TextInput>
            </GroupRight>
          </Group>
          <RadioLine $pl={8} $mt={6}><RadioMark /><Text w={82}>Use Input Profile</Text></RadioLine>
        </ProfilePane>
      </ProfileSide>
      <ViewSide>
        <ViewSelect $w={785} $pl={2}><Text w={66}>Current.Profile</Text><Chevron dir="down" thin /></ViewSelect>
        <ViewGrid>
          <Canvas><Chart /></Canvas>
          <Bar $v><Chevron dir="up" /><Thumb $v $len={162} $before={124} /><Chevron dir="down" /></Bar>
          <Bar><Chevron dir="left" /><Thumb $len={227} $before={228} /><Chevron dir="right" /></Bar>
        </ViewGrid>
      </ViewSide>
    </Split>
    <StatusBorder />
    <StatusRow $h={16} $pl={4}>
      <Ball />
      <StatusCell $w={2} />
      <StatusCell $w={58} $right $low><Text w={45}>1,0352ms</Text></StatusCell>
      <StatusCell $w={58} $right $low><Text w={46}>59,418ms</Text></StatusCell>
      <StatusCell $w={96} />
      <StatusCell $w={945} />
      <GripCorner><Grip /></GripCorner>
    </StatusRow>
  </Window>
);

/* ---------- taskbar icons ---------- */
const WinLogo = () => (
  <Px crisp={false}>
    <path d="M0 2.300l6.500-.9v6.200H0zM7.500 1.200L16 0v7.600H7.500zM0 8.500h6.500v6.200L0 13.800zM7.500 8.500H16V16l-8.500-1.200z" fill="#000" />
  </Px>
);
const SearchIcon = () => (
  <Px w={17} h={17} crisp={false}>
    <circle cx="10.500" cy="6.500" r="5.500" stroke="#222" strokeWidth="1.300" />
    <path d="M6.500 10.500L.5 16.500" stroke="#222" strokeWidth="1.400" />
  </Px>
);
const RingIcon = () => (
  <Px crisp={false}><circle cx="8" cy="8" r="7" stroke="#111" strokeWidth="2" /></Px>
);
const TaskViewIcon = () => (
  <Px>
    <path d="M1 .5h10M1 15.500h10M1.500 3.500h9v9h-9zM14.500 0v3M14.500 8v8" stroke="#111" strokeWidth="1.100" />
    <path d="M13 4h3v3h-3z" fill="#111" />
  </Px>
);
const FilesIcon = () => (
  <Px w={22} h={20} crisp={false}>
    <path d="M0 1.500Q0 0 1.500 0H9l2 3h9.500q1.500 0 1.500 1.500V17H0z" fill="#e5a51b" />
    <path d="M0 4h22v14H0z" fill="#ffd766" />
    <path d="M4 20v-7q0-2 2-2h10q2 0 2 2v7h-4v-4H8v4z" fill="#3f8fe0" />
  </Px>
);
const MailIcon = () => (
  <Px w={24} h={23} crisp={false}>
    <path d="M12 0l12 8v15H0V8z" fill="#0f5fb0" />
    <path d="M2 7h20v8H2z" fill="#e8f4fc" />
    <path d="M0 8l12 8L24 8v15H0z" fill="#1e9be8" />
    <path d="M0 23l12-7 12 7z" fill="#35b8f8" />
  </Px>
);
const AlienIcon = () => (
  <Px w={24} h={24} crisp={false}>
    <path d="M0 0h24v24H0z" fill="#0d0d0d" />
    <path d="M12 4q6 0 6 7-1 6-6 9.500Q7 17 6 11q0-7 6-7z" fill="#fff" />
    <path d="M7 11.500q4 0 4 4-3 0-4-4zM17 11.500q-4 0-4 4 3 0 4-4z" fill="#0d0d0d" />
  </Px>
);
const EdgeIcon = () => (
  <Px w={24} h={24} crisp={false}>
    <defs>
      <linearGradient id="eg" x1="0" y1="0" x2="1" y2=".5"><stop offset="0" stopColor="#2aa8e8" /><stop offset=".6" stopColor="#30c8c0" /><stop offset="1" stopColor="#6be04a" /></linearGradient>
    </defs>
    <circle cx="12" cy="12" r="12" fill="url(#eg)" />
    <path d="M0 11Q2 5 9 5.500q7 1 6.500 6.500Q12 8 9.500 11 8 16 14 18.500q4 1 8-.5Q18 24 12 24 0 24 0 11z" fill="#0b7ad6" />
    <path d="M9.500 11Q4 15 9 21q2.500 2.500 5 2.700 5-1 8-5.700-4 1.500-8 .5-6-2-4.500-7.500z" fill="#0c4f9e" />
    <path d="M15.500 12q0 2-1.500 3 1 2.500 5 2.500 4-.5 5-4.500v-1l-.5 5-2 1.500q-4 1.500-8-.5-4-2.500-3-6.500 2-3 5 .5z" fill="#ebedf0" />
  </Px>
);
const OperaIcon = () => (
  <Px w={24} h={23} crisp={false}>
    <defs>
      <linearGradient id="op" x1="0" y1="0" x2="1" y2="0"><stop offset="0" stopColor="#ff1b2d" /><stop offset=".55" stopColor="#d6001c" /><stop offset=".7" stopColor="#a70014" /><stop offset="1" stopColor="#ff5050" /></linearGradient>
    </defs>
    <path fillRule="evenodd" d="M11.500 0a11.300 11.500 0 100 23 11.300 11.500 0 100-23zm0 3.500c3 0 5 3.600 5 8s-2 8-5 8-5-3.600-5-8 2-8 5-8z" fill="url(#op)" />
  </Px>
);
const CmdIcon = () => (
  <Px w={24} h={19}>
    <path d="M.5.5h22v18H.5z" fill="#000" stroke="#8a8f98" />
    <path d="M1 1h21v2H1z" fill="#c8ccd2" />
    <path d="M6 5.500H3.500v3H6M8.500 5v1M8.500 8v1M10 4.500l2 4.500M13 8.500h6" stroke="#ddd" />
  </Px>
);
const CognexIcon = () => (
  <Px w={24} h={24} crisp={false}>
    <rect x=".5" width="24" height="24" rx="3" fill="#fff" />
    <ellipse cx="12.500" cy="12.200" rx="9.700" ry="5.800" fill="#ffd84a" stroke="#f7b500" strokeWidth="3" />
    <ellipse cx="12.500" cy="10" rx="8" ry="4.600" fill="#fff" stroke="#777" strokeWidth="1.500" />
    <ellipse cx="12.500" cy="9.200" rx="5" ry="2.800" stroke="#888" strokeWidth="1.400" fill="#fff" />
    <ellipse cx="12.500" cy="8.700" rx="3.200" ry="1.900" fill="#f7c500" />
  </Px>
);
const GearIcon = () => (
  <Px w={18} h={18} crisp={false}>
    <circle cx="9" cy="9" r="5.500" stroke="#444" strokeWidth="2" />
    {[22.5, 67.5, 112.5, 157.5, 202.5, 247.5, 292.5, 337.5].map((a) => (
      <path key={a} d="M7.300 0h3.400v3H7.300z" fill="#444" transform={`rotate(${a} 9 9)`} />
    ))}
  </Px>
);
const WarnIcon = () => (
  <Px w={14} h={14} crisp={false}>
    <path d="M7 .5L13.700 13.500H.3z" fill="#fc0" stroke="#fc0" strokeLinejoin="round" />
    <path d="M7 4.500v5M7 11v1.800" stroke="#222" strokeWidth="1.700" />
  </Px>
);

export default function App() {
  return (
    <>
      <Global />
      <Desktop>
        <Ide>
          <MainSide>
            <Docks>
              <Explorer>
                <ExplorerTree>
                  <TreeLine $h={19} $pl={58}><Text ui w={18} color="#333">FTP</Text></TreeLine>
                  <TreeLine $h={18} $pl={45}><Expanded /><Text ui w={31} color="#333">Rs232</Text></TreeLine>
                  <TreeLine $h={20} $pl={80} $gap={4}><CableIcon /><Text ui w={33} color="#333">COM4</Text></TreeLine>
                  <TreeLine $h={20} $pl={80} $gap={4}><CableIcon /><Text ui w={33} color="#333">COM3</Text></TreeLine>
                  <TreeLine $h={18} $pl={45}><Expanded /><Text ui w={34} color="#333">TCP/IP</Text></TreeLine>
                  <TreeLine $h={20} $pl={77}><Selected><ServerIcon /><Text ui bold w={53} color="#fff">tcpserver</Text></Selected></TreeLine>
                  <TreeLine $h={24} $pl={24} $gap={4}><DbIcon /><Text ui bold w={57} color="#222">Databases</Text></TreeLine>
                </ExplorerTree>
                <ExplorerScroll>
                  <Px w={4} h={8} crisp={false}><path d="M4 0v8L0 4z" fill="#000" /></Px>
                  <ExplorerThumb />
                  <Px w={4} h={8} crisp={false}><path d="M0 0v8l4-4z" fill="#000" /></Px>
                </ExplorerScroll>
              </Explorer>
              <Job>
                <JobBody>
                  <JobTreePane>
                    <JobTree>
                      <Wires><TreeWires /></Wires>
                      {jobRows.map((r) => (
                        <JobRow key={r.t} $root={r.root}>
                          {r.i}
                          <Text ui w={r.w} color={r.c}>{r.t}</Text>
                        </JobRow>
                      ))}
                    </JobTree>
                  </JobTreePane>
                  <JobView>
                    <NavyPane />
                    <EndDown $v><Chevron dir="down" /></EndDown>
                    <Bar><Chevron dir="left" /><Thumb $len={288} $before={277} /><Chevron dir="right" /></Bar>
                  </JobView>
                </JobBody>
                <StatusRow $h={20}>
                  <Ball />
                  <StatusCell $w={2} />
                  <StatusCell $w={58} $right $low><Text ui w={49}>4065,2ms</Text></StatusCell>
                  <StatusCell $w={58} $right $low><Text ui w={49}>4077,1ms</Text></StatusCell>
                  <StatusCell $w={96} />
                  <StatusCell $w={1181} />
                  <GripCorner><Grip /></GripCorner>
                </StatusRow>
              </Job>
            </Docks>
            <Errors>
              <ErrorsTitle>
                <Text ui w={31} color="#fff">Errors</Text>
                <TitleButtons>
                  <Px w={8} h={5} crisp={false}><path d="M0 0h8L4 5z" fill="#ccd3e2" /></Px>
                  <Px w={9} h={9} crisp={false}><path d="M0 0l9 9M9 0L0 9" stroke="#ccd3e2" strokeWidth="1.700" /></Px>
                </TitleButtons>
              </ErrorsTitle>
              <ErrorsHead>
                <ErrorsCol $w={189}><Text ui w={36}>Source</Text></ErrorsCol>
                <ErrorsCol $w={345}><Text ui w={60}>Description</Text></ErrorsCol>
                <ErrorsCol $w={60}><Text ui w={49}>Category</Text></ErrorsCol>
                <ErrorsCol />
              </ErrorsHead>
            </Errors>
            <DockTabs>
              <DockTab $on $w={45}><Text ui w={31}>Errors</Text></DockTab>
              <DockTab $w={111}><Text ui w={99} color="#fff">Project Verification</Text></DockTab>
              <DockTab $w={47}><Text ui w={35} color="#fff">Search</Text></DockTab>
            </DockTabs>
          </MainSide>
          <RightDock>
            <ToolboxPane />
            <DockTabs>
              <DockTab $on $w={56}><Text ui w={42}>Toolbox</Text></DockTab>
              <DockTab $w={65}><Text ui w={54} color="#fff">Properties</Text></DockTab>
            </DockTabs>
          </RightDock>
        </Ide>
        <AppStatus>
          <StatusGroup $gap={6}>
            <WarnIcon />
            <Text ui w={502}>Unable to convert input pin HMI_Wyswietlanie1 PatMax3D_Results_Item_0_GetPose_Translation</Text>
          </StatusGroup>
          <StatusGroup $gap={8}>
            <Text ui w={140}>Last saved 28 minutes ago</Text>
            <RedDot />
          </StatusGroup>
        </AppStatus>
        <Taskbar>
          <StartButton><WinLogo /></StartButton>
          <SearchBox><SearchIcon /><Text ui size={15} w={188} color="#333">Wpisz tu wyszukiwane słowa</Text></SearchBox>
          <TaskItem $w={48}><RingIcon /></TaskItem>
          <TaskItem $w={48}><TaskViewIcon /></TaskItem>
          <TaskItem $w={40} $ml={7} $open><FilesIcon /></TaskItem>
          <TaskItem $w={40} $ml={9}><MailIcon /></TaskItem>
          <TaskItem $w={40} $ml={9}><AlienIcon /></TaskItem>
          <TaskItem $w={40} $ml={9}><EdgeIcon /></TaskItem>
          <TaskItem $w={40} $ml={9} $open><OperaIcon /></TaskItem>
          <TaskItem $w={40} $ml={9} $open><CmdIcon /></TaskItem>
          <TaskItem $w={44} $ml={5} $open $active><CognexIcon /></TaskItem>
          <ActiveSplit />
          <TaskItem $w={40} $ml={5} $open><GearIcon /></TaskItem>
          <Tray>
            <TrayItem $w={24}><Px w={12} h={7} crisp={false}><path d="M.5 6.500l5.500-5.500 5.500 5.500" stroke="#111" strokeWidth="1.300" /></Px></TrayItem>
            <TrayItem $w={22}><Px w={12} h={16} crisp={false}><path d="M.7 4.700h7v7h-7zM8 7.500l3-2v6l-3-2M2 1.500q3.500-1.500 7 0M2 15q3.500 1 7 0" stroke="#111" strokeWidth="1.200" /></Px></TrayItem>
            <TrayItem $w={27}><Px w={16} h={12}><path d="M5.500 3.500h9v7h-9z" stroke="#111" /><path d="M7 5h6v4H7zM15 5h1v4h-1z" fill="#111" /><path d="M0 2h5v4H0zM1 0h1v2H1zM3 0h1v2H3zM2 6h1v4h3v1H2z" fill="#111" /></Px></TrayItem>
            <TrayItem $w={21}><Px w={13} h={14} crisp={false}><g stroke="#333" strokeWidth="1.100"><path d="M.5 13Q1 2 12.500 1.500M3.500 13Q4 5 12.500 4.500M6.500 13q.5-5 6-5.500" /></g><circle cx="11" cy="12" r="2" fill="#111" /></Px></TrayItem>
            <TrayItem $w={26}><Px w={17} h={14} crisp={false}><path d="M.5 5H3l3-3.500v11L3 9H.5z" stroke="#111" strokeWidth="1.100" /><path d="M8 5q1.500 2 0 4.500M10.500 3q3 4 0 8.500" stroke="#111" strokeWidth="1.100" /><path d="M13.500 1q4 6 0 12" stroke="#999" /></Px></TrayItem>
            <Clock>
              <Text ui w={26}>10:08</Text>
              <Text ui w={53}>09.06.2021</Text>
            </Clock>
            <Notify>
              <Px w={16} h={16} crisp={false}>
                <path d="M0 0h16v12H8l-4 4v-4H0z" fill="#000" />
                <path d="M3 3.500h10M3 6.500h10M3 9.500h6" stroke="#fff" />
              </Px>
              <Badge><Text ui w={6} size={11}>3</Text></Badge>
            </Notify>
            <ShowDesktop />
          </Tray>
        </Taskbar>
        <AnalysisWindow />
        <SectionWindow />
      </Desktop>
    </>
  );
}
